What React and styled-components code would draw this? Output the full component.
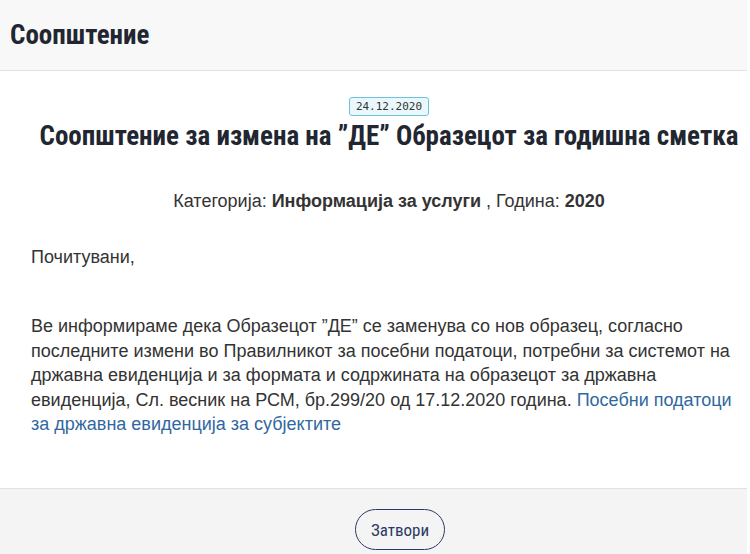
import React from "react";
import styled, { createGlobalStyle } from "styled-components";

const GlobalStyle = createGlobalStyle`
  html, body {
    margin: 0;
    padding: 0;
    background: #ffffff;
  }
  body {
    font-family: "Liberation Sans", Arial, sans-serif;
    color: #333333;
  }
`;

const condensed = `"Roboto Condensed", "Liberation Sans Narrow", "DejaVu Sans Condensed", Roboto, sans-serif`;

/* Modal shell */
const Modal = styled.div`
  width: 747px;
  height: 554px;
  display: flex;
  flex-direction: column;
  overflow: hidden;
`;

const Header = styled.header`
  height: 70px;
  flex-shrink: 0;
  display: flex;
  align-items: center;
  padding: 0 10px;
  background: #f8f8f8;
  border-bottom: 1px solid #e1e1e1;
`;

const HeaderTitle = styled.h4`
  margin: 0;
  font-family: ${condensed};
  font-stretch: condensed;
  font-weight: 700;
  font-size: 27px;
  color: #212631;
`;

/* Body */
const Body = styled.div`
  flex: 1;
  padding: 26px 0 0 31px;
`;

const Meta = styled.div`
  display: flex;
  flex-direction: column;
  align-items: center;
  text-align: center;
`;

const DateBadge = styled.span`
  font-family: "DejaVu Sans Mono", "Liberation Mono", monospace;
  font-size: 11px;
  line-height: 17px;
  padding: 0 6px;
  color: #333;
  background: #eaf8fc;
  border: 1px solid #6cc4dc;
  border-radius: 3px;
`;

const Title = styled.h2`
  margin: 2px 0 0;
  font-family: ${condensed};
  font-stretch: condensed;
  font-weight: 700;
  font-size: 27px;
  line-height: 36px;
  color: #212631;
  white-space: nowrap;
`;

const Category = styled.p`
  margin: 36px 0 0;
  font-size: 18px;
  line-height: 22px;
  color: #333;

  b {
    font-weight: 700;
  }
`;

const Text = styled.p`
  margin: ${(p) => p.$top || 0}px 0 0;
  font-size: 18px;
  line-height: 24.5px;
  color: #333;
`;

const TextLink = styled.a`
  color: #31679f;
  text-decoration: none;
`;

/* Footer */
const Footer = styled.footer`
  height: 66px;
  flex-shrink: 0;
  display: flex;
  justify-content: center;
  align-items: flex-start;
  padding: 20px 0 0 53px;
  box-sizing: border-box;
  background: #f4f4f4;
  border-top: 1px solid #e1e1e1;
`;

const CloseButton = styled.button`
  width: 90px;
  height: 41px;
  border: 1.5px solid #2b3a64;
  border-radius: 21px;
  background: transparent;
  font-family: ${condensed};
  font-stretch: condensed;
  font-size: 17px;
  color: #2b3a64;
  cursor: pointer;
`;

export default function App() {
  return (
    <>
      <GlobalStyle />
      <Modal>
        <Header>
          <HeaderTitle>Соопштение</HeaderTitle>
        </Header>
        <Body>
          <Meta>
            <DateBadge>24.12.2020</DateBadge>
            <Title>Соопштение за измена на ”ДЕ” Образецот за годишна сметка</Title>
            <Category>
              Категорија: <b>Информација за услуги</b> , Година: <b>2020</b>
            </Category>
          </Meta>
          <Text $top={33}>Почитувани,</Text>
          <Text $top={44.5}>
            Ве информираме дека Образецот ”ДЕ” се заменува со нов образец, согласно
            последните измени во Правилникот за посебни податоци, потребни за системот на
            државна евиденција и за формата и содржината на образецот за државна
            евиденција, Сл. весник на РСМ, бр.299/20 од 17.12.2020 година.{" "}
            <TextLink href="#">Посебни податоци за државна евиденција за субјектите</TextLink>
          </Text>
        </Body>
        <Footer>
          <CloseButton>Затвори</CloseButton>
        </Footer>
      </Modal>
    </>
  );
}
